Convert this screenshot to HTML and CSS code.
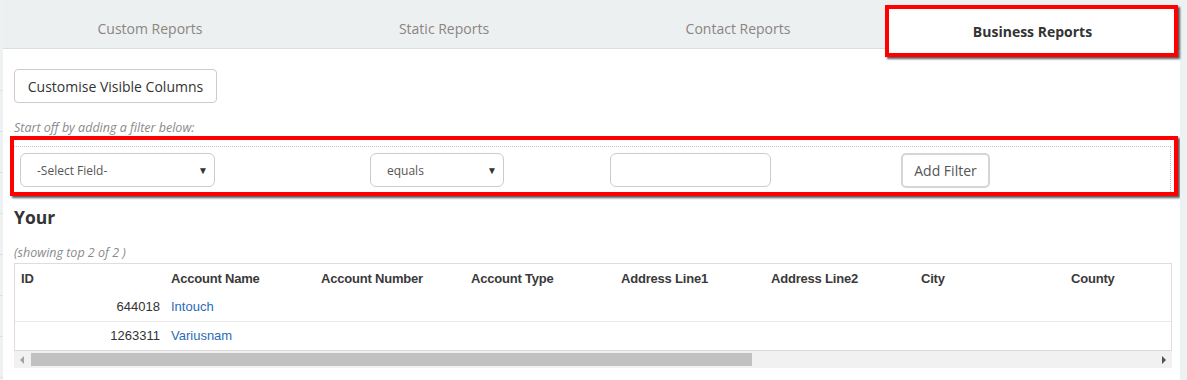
FILE: index.html
```html
<!DOCTYPE html>
<html lang="en">
<head>
<meta charset="utf-8">
<title>Business Reports</title>
<link rel="stylesheet" href="styles.css">
</head>
<body>
<div class="page">
  <div class="side"></div>
  <div class="main">
    <nav class="tabs">
      <a class="tab">Custom Reports</a>
      <a class="tab">Static Reports</a>
      <a class="tab">Contact Reports</a>
      <a class="tab active">Business Reports</a>
    </nav>
    <div class="content">
      <button class="btn btn-cols">Customise Visible Columns</button>
      <p class="hint">Start off by adding a filter below:</p>
      <div class="annot">
        <div class="filter">
          <div class="select sel-field"><span>-Select Field-</span><span class="caret">▼</span></div>
          <div class="select sel-op"><span>equals</span><span class="caret">▼</span></div>
          <div class="text-input"></div>
          <div><button class="btn btn-add">Add Filter</button></div>
        </div>
      </div>
      <h2 class="title">Your</h2>
      <p class="count">(showing top 2 of 2 )</p>
      <div class="grid-wrap">
        <table class="grid">
          <thead>
            <tr>
              <th>ID</th><th>Account Name</th><th>Account Number</th><th>Account Type</th>
              <th>Address Line1</th><th>Address Line2</th><th>City</th><th>County</th>
            </tr>
          </thead>
          <tbody>
            <tr>
              <td class="num">644018</td><td><a class="link">Intouch</a></td><td></td><td></td><td></td><td></td><td></td><td></td>
            </tr>
            <tr>
              <td class="num">1263311</td><td><a class="link">Variusnam</a></td><td></td><td></td><td></td><td></td><td></td><td></td>
            </tr>
          </tbody>
        </table>
      </div>
      <div class="hscroll">
        <span class="arrow arrow-left"></span>
        <div class="track"><div class="thumb"></div></div>
        <span class="arrow arrow-right"></span>
      </div>
    </div>
  </div>
  <div class="rside"></div>
</div>
</body>
</html>
```
FILE: styles.css
```css
* { box-sizing: border-box; }
html, body { margin: 0; padding: 0; }
body {
  background: #eef1f2;
  font-family: "Open Sans", "Liberation Sans", sans-serif;
  color: #333;
}
.page {
  display: flex;
  min-height: 380px;
}
.side {
  width: 3px;
  flex: 0 0 3px;
  background-color: #eef1f2;
  background-image: repeating-linear-gradient(to bottom, transparent 0, transparent 40px, #dde0e1 40px, #dde0e1 41px);
  background-position: 0 50px;
  background-repeat: no-repeat;
  background-size: 3px 400px;
}
.rside {
  flex: 1 1 auto;
  background: #eef1f2;
}
.main {
  width: 1177px;
  flex: 0 0 1177px;
  background: #fff;
}
.tabs {
  display: flex;
  align-items: flex-start;
  height: 49px;
  background: #edf0f1;
  border-bottom: 1px solid #dcdfe0;
}
.tab {
  flex: 0 0 294px;
  height: 48px;
  padding-top: 9px;
  display: flex;
  align-items: center;
  justify-content: center;
  font-size: 14px;
  color: #8a8580;
  cursor: pointer;
}
.tab.active {
  flex: 0 0 293px;
  height: 52px;
  margin-top: 5px;
  margin-left: 0;
  padding-top: 0;
  padding-left: 2px;
  background: #fff;
  border: 4px solid #ff0000;
  box-shadow: 2px 2px 2px rgba(0, 0, 0, 0.65);
  color: #333;
  font-weight: bold;
  position: relative;
  z-index: 1;
}
.content {
  padding: 20px 8px 0 11px;
}
.btn {
  background: #fff;
  border: 1px solid #ccc;
  border-radius: 4px;
  font-family: "Open Sans", "Liberation Sans", sans-serif;
  font-size: 14px;
  color: #333;
  padding: 0 12px;
}
.btn-cols {
  height: 34px;
  width: 203px;
  padding: 0;
}
.hint {
  margin: 16px 0 0;
  font-size: 12.5px;
  line-height: 17px;
  font-style: italic;
  color: #8a8a8a;
}
.annot {
  margin: 0 -6px 0 -4px;
  border: 4px solid #ff0000;
  padding: 6px 3px 0 0;
  box-shadow: 2px 2px 2px rgba(0, 0, 0, 0.65);
}
.filter {
  border-top: 1px dotted #c4c4c4;
  border-right: 1px dotted #c4c4c4;
  padding: 6px 0 4px 6px;
  display: grid;
  grid-template-columns: 350px 240px 291px auto;
  align-items: start;
}
.select {
  height: 34px;
  border: 1px solid #ccc;
  border-radius: 6px;
  font-size: 12px;
  color: #555;
  padding: 0 6px 0 16px;
  display: flex;
  align-items: center;
  justify-content: space-between;
}
.sel-field { width: 195px; }
.sel-op { width: 134px; }
.caret {
  font-size: 10px;
  color: #333;
}
.text-input {
  width: 161px;
  height: 34px;
  border: 1px solid #ccc;
  border-radius: 6px;
}
.btn-add {
  width: 89px;
  height: 35px;
  border: 2px solid #d6d6d6;
  border-radius: 5px;
  color: #555;
  padding: 0;
}
.title {
  margin: 9px 0 0;
  font-size: 17.5px;
  line-height: 24px;
  font-weight: bold;
  color: #333;
}
.count {
  margin: 16px 0 2px;
  font-size: 12.5px;
  line-height: 16px;
  font-style: italic;
  color: #8a8a8a;
}
.grid-wrap {
  width: 1158px;
  overflow: hidden;
  border: 1px solid #ddd;
  border-bottom: none;
}
.grid {
  table-layout: fixed;
  width: 1200px;
  border-collapse: collapse;
  font-family: "Liberation Sans", Arial, sans-serif;
  font-size: 13px;
}
.grid th, .grid td {
  width: 150px;
  height: 29px;
  padding: 0 6px;
  text-align: left;
  vertical-align: middle;
  color: #333;
}
.grid th {
  font-weight: bold;
  height: 28px;
  letter-spacing: -0.2px;
  color: #3a3a3a;
}
.grid tbody tr { border-bottom: 1px solid #e8e8e8; }
.grid tbody tr:last-child { border-bottom: 1px solid #d8d8d8; }
.grid td.num {
  text-align: right;
  padding-right: 5px;
}
.link {
  color: #2d6cb5;
  cursor: pointer;
}
.hscroll {
  width: 1158px;
  height: 17px;
  background: #f1f1f1;
  display: flex;
  align-items: center;
}
.arrow {
  flex: 0 0 17px;
  height: 17px;
  position: relative;
}
.arrow::after {
  content: "";
  position: absolute;
  top: 5px;
  left: 6px;
  border-top: 4px solid transparent;
  border-bottom: 4px solid transparent;
}
.arrow-left::after { border-right: 4px solid #a3a3a3; }
.arrow-right::after { border-left: 4px solid #505050; left: 7px; }
.track {
  flex: 1 1 auto;
  height: 17px;
  padding: 2px 0;
}
.thumb {
  width: 721px;
  height: 13px;
  background: #c1c1c1;
}
```
